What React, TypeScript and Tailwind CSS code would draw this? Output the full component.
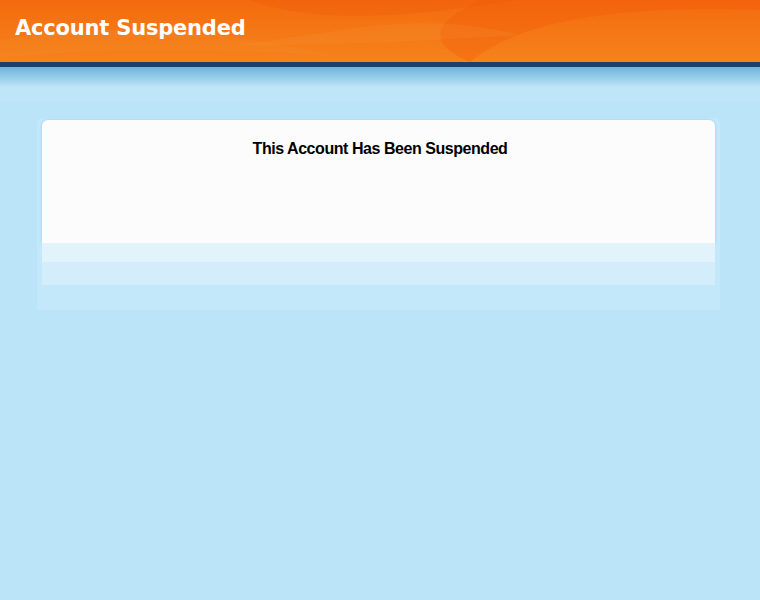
export default function App() {
    return (
        <div className="min-h-[600px] w-full bg-[#bce4f8] font-['Liberation_Sans',Arial,sans-serif]">
            <header className="relative h-[62px] overflow-hidden bg-gradient-to-b from-[#f46a0e] to-[#f5831b]">
                <svg className="absolute inset-0 h-full w-full" viewBox="0 0 760 62" preserveAspectRatio="none">
                    <path d="M250 0 C 330 30, 450 10, 520 0 Z" fill="#f05a06" opacity="0.3" />
                    <path d="M470 62 C 520 20, 620 5, 760 10 L760 0 L 480 0 C 440 20, 420 40, 470 62 Z" fill="#f15605" opacity="0.3" />
                    <path d="M0 40 C 120 20, 220 30, 330 55 C 230 50, 120 45, 0 58 Z" fill="#f79130" opacity="0.2" />
                    <path d="M240 45 C 350 30, 420 10, 520 35 C 440 40, 360 45, 240 45 Z" fill="#f8a040" opacity="0.15" />
                </svg>
                <h1 className="relative pl-[15px] pt-[14px] font-['DejaVu_Sans',sans-serif] text-[21px] font-bold leading-[28px] tracking-[-0.2px] text-white">
                    Account Suspended
                </h1>
            </header>
            <div className="h-[5px] bg-[#1d3f6b]" />
            <div className="h-[20px] bg-gradient-to-b from-[#6eb2da] to-[#bde5f8]" />
            <div className="h-[15px] bg-[#bfe5f9]" />

            <main className="pl-[37px] pr-[40px] pt-[16px]">
                <div className="rounded-t-[6px] bg-[#c3e8fa] px-[5px] pt-[2px] pb-[25px]">
                    <div className="rounded-t-[6px] bg-[#fcfcfc] shadow-[0_0_3px_rgba(120,190,230,0.6)]">
                        <h2 className="pl-[3px] pt-[19px] text-center text-[16px] font-bold leading-[20px] tracking-[-0.45px] text-black">
                            This Account Has Been Suspended
                        </h2>
                        <div className="h-[84px]" />
                    </div>
                    <div className="h-[19px] bg-[#e3f3fb]" />
                    <div className="h-[23px] bg-[#d3edfb]" />
                </div>
            </main>
        </div>
    );
}
